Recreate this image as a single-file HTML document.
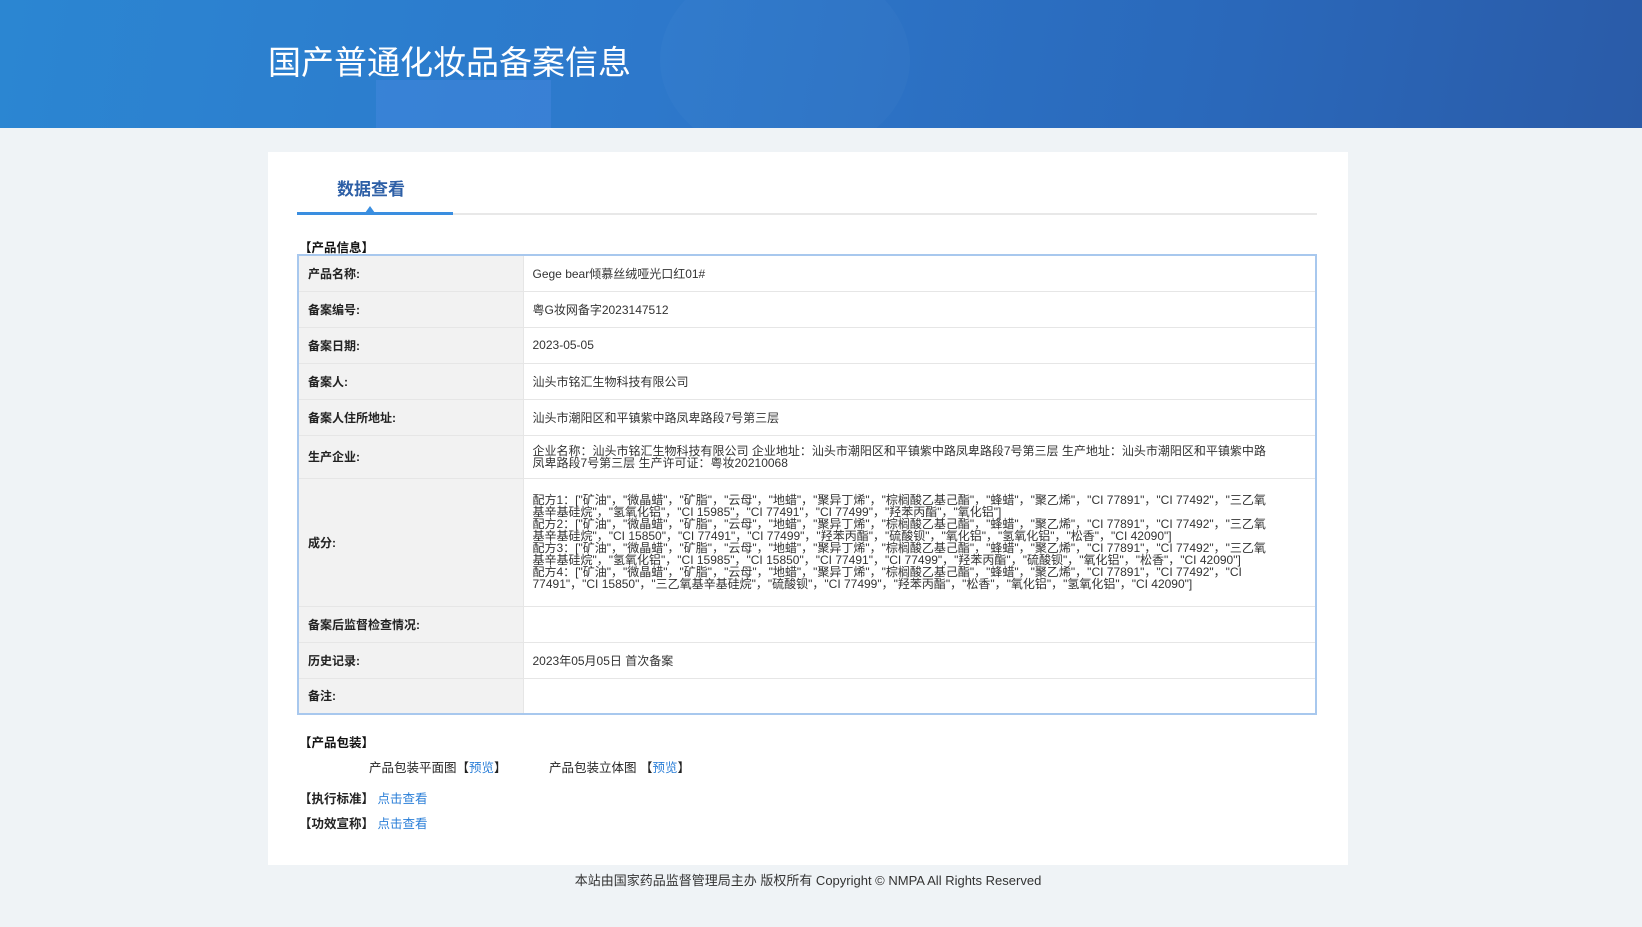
<!DOCTYPE html>
<html><head><meta charset="utf-8"><style>
*{margin:0;padding:0;box-sizing:border-box}
body{width:1642px;height:927px;background:#eff3f6;font-family:"Liberation Sans","Noto Sans CJK SC",sans-serif;color:#333;position:relative;overflow:hidden}
.hd{position:absolute;left:0;top:0;width:1642px;height:128px;background:linear-gradient(100deg,#2b86d2 0%,#2d78cb 40%,#2a68ba 75%,#2a5ba8 100%);overflow:hidden}
.hd .s1{position:absolute;left:376px;top:80px;width:175px;height:60px;background:rgba(80,140,230,.35)}
.hd .s2{position:absolute;left:660px;top:-40px;width:250px;height:200px;border-radius:50%;background:rgba(255,255,255,.025)}
.hd h1{position:absolute;left:268px;top:36px;font-size:33px;font-weight:normal;color:#fff}
.card{position:absolute;left:268px;top:152px;width:1080px;height:713px;background:#fff}
.tab{position:absolute;left:337px;top:175px;font-size:17px;font-weight:bold;color:#2d5fa6}
.tl{position:absolute;left:297px;top:213px;width:1020px;height:2px;background:#e8e8e8}
.tb{position:absolute;left:297px;top:212px;width:156px;height:3px;background:#3a8ee0}
.tri{position:absolute;left:365px;top:206px;width:0;height:0;border-left:5px solid transparent;border-right:5px solid transparent;border-bottom:7px solid #3a8ee0}
.sec{position:absolute;font-size:12.5px;font-weight:bold;color:#111}
table{position:absolute;left:297px;top:254px;width:1020px;border-collapse:collapse;border:2px solid #a8c8ee;font-size:12px}
td{border-bottom:1px solid #e6e6e6;padding:0 9px;vertical-align:middle}
td.l{width:225px;background:#f2f2f2;font-weight:bold;color:#222;border-right:1px solid #e6e6e6}
td.v{color:#333}
td.ing{line-height:12px;font-size:12px;padding-right:48px}
a{color:#2b7fd8;text-decoration:none}
.p{position:absolute;font-size:12.5px;color:#222}
.ft{position:absolute;left:268px;width:1080px;top:870px;text-align:center;font-size:13px;color:#333}
</style></head><body>
<div class="hd"><div class="s2"></div><div class="s1"></div><h1>国产普通化妆品备案信息</h1></div>
<div class="card"></div>
<div class="tab">数据查看</div>
<div class="tl"></div><div class="tb"></div><div class="tri"></div>
<div class="sec" style="left:299px;top:237px">【产品信息】</div>
<table>
<tr style="height:36px"><td class="l">产品名称:</td><td class="v">Gege bear倾慕丝绒哑光口红01#</td></tr>
<tr style="height:36px"><td class="l">备案编号:</td><td class="v">粤G妆网备字2023147512</td></tr>
<tr style="height:36px"><td class="l">备案日期:</td><td class="v">2023-05-05</td></tr>
<tr style="height:36px"><td class="l">备案人:</td><td class="v">汕头市铭汇生物科技有限公司</td></tr>
<tr style="height:36px"><td class="l">备案人住所地址:</td><td class="v">汕头市潮阳区和平镇紫中路凤卑路段7号第三层</td></tr>
<tr style="height:43px"><td class="l">生产企业:</td><td class="v ing">企业名称：汕头市铭汇生物科技有限公司 企业地址：汕头市潮阳区和平镇紫中路凤卑路段7号第三层 生产地址：汕头市潮阳区和平镇紫中路凤卑路段7号第三层 生产许可证：粤妆20210068</td></tr>
<tr style="height:128px"><td class="l">成分:</td><td class="v ing">配方1：["矿油"，"微晶蜡"，"矿脂"，"云母"，"地蜡"，"聚异丁烯"，"棕榈酸乙基己酯"，"蜂蜡"，"聚乙烯"，"CI 77891"，"CI 77492"，"三乙氧基辛基硅烷"，"氢氧化铝"，"CI 15985"，"CI 77491"，"CI 77499"，"羟苯丙酯"，"氧化铝"]<br>配方2：["矿油"，"微晶蜡"，"矿脂"，"云母"，"地蜡"，"聚异丁烯"，"棕榈酸乙基己酯"，"蜂蜡"，"聚乙烯"，"CI 77891"，"CI 77492"，"三乙氧基辛基硅烷"，"CI 15850"，"CI 77491"，"CI 77499"，"羟苯丙酯"，"硫酸钡"，"氧化铝"，"氢氧化铝"，"松香"，"CI 42090"]<br>配方3：["矿油"，"微晶蜡"，"矿脂"，"云母"，"地蜡"，"聚异丁烯"，"棕榈酸乙基己酯"，"蜂蜡"，"聚乙烯"，"CI 77891"，"CI 77492"，"三乙氧基辛基硅烷"，"氢氧化铝"，"CI 15985"，"CI 15850"，"CI 77491"，"CI 77499"，"羟苯丙酯"，"硫酸钡"，"氧化铝"，"松香"，"CI 42090"]<br>配方4：["矿油"，"微晶蜡"，"矿脂"，"云母"，"地蜡"，"聚异丁烯"，"棕榈酸乙基己酯"，"蜂蜡"，"聚乙烯"，"CI 77891"，"CI 77492"，"CI 77491"，"CI 15850"，"三乙氧基辛基硅烷"，"硫酸钡"，"CI 77499"，"羟苯丙酯"，"松香"，"氧化铝"，"氢氧化铝"，"CI 42090"]</td></tr>
<tr style="height:36px"><td class="l">备案后监督检查情况:</td><td class="v"></td></tr>
<tr style="height:36px"><td class="l">历史记录:</td><td class="v">2023年05月05日 首次备案</td></tr>
<tr style="height:36px"><td class="l">备注:</td><td class="v"></td></tr>
</table>
<div class="sec" style="left:299px;top:732px">【产品包装】</div>
<div class="p" style="left:369px;top:757px">产品包装平面图【<a>预览</a>】</div>
<div class="p" style="left:549px;top:757px">产品包装立体图 【<a>预览</a>】</div>
<div class="p" style="left:299px;top:788px"><b>【执行标准】</b> <a>点击查看</a></div>
<div class="p" style="left:299px;top:813px"><b>【功效宣称】</b> <a>点击查看</a></div>
<div class="ft">本站由国家药品监督管理局主办 版权所有 Copyright © NMPA All Rights Reserved</div>
</body></html>
